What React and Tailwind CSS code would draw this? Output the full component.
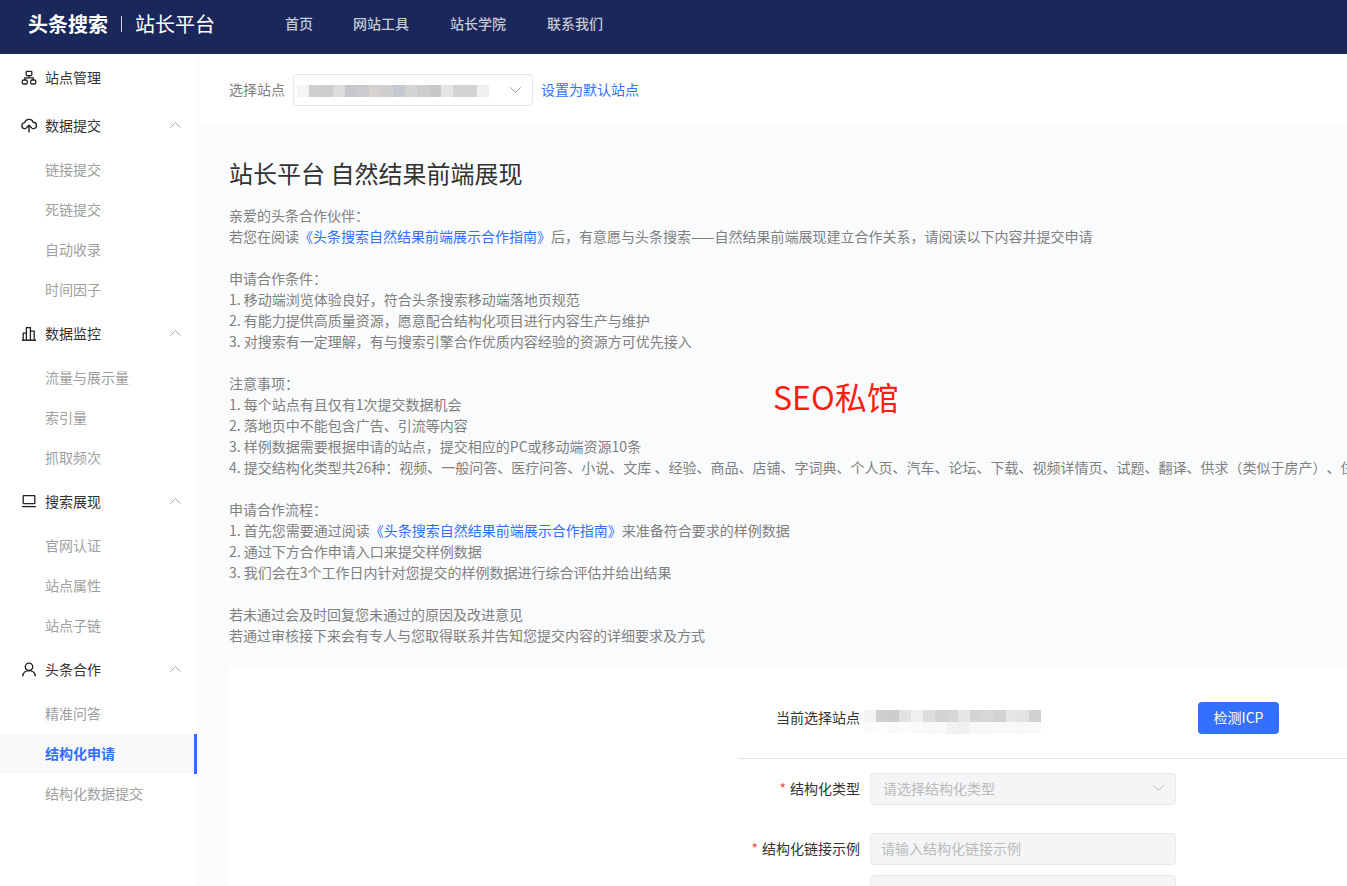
import React from 'react';

const NetworkIcon = () => (
  <svg width="16" height="16" viewBox="0 0 16 16" fill="none" stroke="#222" strokeWidth="1.3">
    <rect x="5.2" y="2.4" width="5.6" height="4.2" rx="0.5" />
    <path d="M8 6.6v2.2M3.8 11V8.8h8.4V11" />
    <rect x="1.3" y="11" width="5" height="4" rx="1.2" />
    <rect x="9.7" y="11" width="5" height="4" rx="1.2" />
  </svg>
);

const CloudIcon = () => (
  <svg width="16" height="16" viewBox="0 0 16 16" fill="none" stroke="#222" strokeWidth="1.4" strokeLinecap="round" strokeLinejoin="round">
    <path d="M4.6 11.6H4a3 3 0 0 1-.3-6A4.5 4.5 0 0 1 12.2 5.2a3.2 3.2 0 0 1 0 6.4h-.8" />
    <path d="M8 15V8.4M5.5 10.8 8 8.3l2.5 2.5" />
  </svg>
);

const ChartIcon = () => (
  <svg width="16" height="16" viewBox="0 0 16 16" fill="none" stroke="#222" strokeWidth="1.3">
    <path d="M1 15.2h14" strokeWidth="1.5" />
    <path d="M2.2 15V8.2h3.2V15M5.4 15V2.6h4V15M9.4 15V6.2h3.8V15" />
  </svg>
);

const LaptopIcon = () => (
  <svg width="16" height="16" viewBox="0 0 16 16" fill="none" stroke="#222" strokeWidth="1.3">
    <rect x="2.2" y="2.6" width="11.6" height="8" rx="0.4" />
    <path d="M1 13.6h14" />
  </svg>
);

const UserIcon = () => (
  <svg width="16" height="16" viewBox="0 0 16 16" fill="none" stroke="#222" strokeWidth="1.4">
    <circle cx="8" cy="5.8" r="3.7" />
    <path d="M1.7 15.2c.3-3.4 3-5.6 6.3-5.6s6 2.2 6.3 5.6" />
  </svg>
);

const Chevron = ({ up, color = '#aaa' }) => (
  <svg width="11" height="6" viewBox="0 0 11 6" fill="none" stroke={color} strokeWidth="1">
    <path d={up ? 'M.4 5.6 5.5.6l5.1 5' : 'M.4.4l5.1 5 5.1-5'} />
  </svg>
);

const menu = [
  { title: '站点管理', icon: <NetworkIcon /> },
  { title: '数据提交', icon: <CloudIcon />, items: ['链接提交', '死链提交', '自动收录', '时间因子'] },
  { title: '数据监控', icon: <ChartIcon />, items: ['流量与展示量', '索引量', '抓取频次'] },
  { title: '搜索展现', icon: <LaptopIcon />, items: ['官网认证', '站点属性', '站点子链'] },
  { title: '头条合作', icon: <UserIcon />, items: ['精准问答', '结构化申请', '结构化数据提交'] },
];

const ACTIVE = '结构化申请';

// mosaic colours of the blurred site name
const topBlur = ['#f4f4f4', '#cfcfcf', '#cdcdcd', '#dcdcdc', '#c7c7cb', '#cbcbcf', '#d6d2d0', '#cfcfd2', '#c6c8d1', '#d4d4d4', '#cecdcb', '#c8c8c8', '#e4e4e4', '#d3d3d3', '#d2d4d4', '#f0f0f0'];
const formBlur = ['#f4f4f4', '#cfcfcf', '#cdcdcd', '#e2e2e2', '#f0f0f0', '#dedede', '#d5d3d3', '#d6d6d6', '#e6e6e6', '#d6d4d2', '#d9d7d5', '#d2d2d2', '#e6e6e6', '#e2e2e2', '#d0d0d0'];
const formBlurLow = ['#fbfbfb', '#fdfdfd', '#fafafa', '#fcfcfc', '#fafafa', '#f8f8f8', '#fafafa', '#f2f2f2', '#f0f0f0', '#f8f8f8', '#f7f7f7', '#f9f9f9', '#f9f9f9', '#f8f8f8', '#f9f9f9'];

const Blur = ({ colors, cell, height, className = '' }) => (
  <div className={`flex ${className}`}>
    {colors.map((c, i) => (
      <div key={i} style={{ width: cell, height, background: c }} />
    ))}
  </div>
);

const Link = ({ children }) => <span className="text-[#3370ff]">{children}</span>;

const Intro = () => (
  <div className="whitespace-nowrap text-sm leading-[21px] text-[#808080] [text-spacing-trim:space-all]">
    <p>亲爱的头条合作伙伴：</p>
    <p>若您在阅读<Link>《头条搜索自然结果前端展示合作指南》</Link>后，有意愿与头条搜索——自然结果前端展现建立合作关系，请阅读以下内容并提交申请</p>
    <p className="mt-[21px]">申请合作条件：</p>
    <p>1. 移动端浏览体验良好，符合头条搜索移动端落地页规范</p>
    <p>2. 有能力提供高质量资源，愿意配合结构化项目进行内容生产与维护</p>
    <p>3. 对搜索有一定理解，有与搜索引擎合作优质内容经验的资源方可优先接入</p>
    <p className="mt-[21px]">注意事项：</p>
    <p>1. 每个站点有且仅有1次提交数据机会</p>
    <p>2. 落地页中不能包含广告、引流等内容</p>
    <p>3. 样例数据需要根据申请的站点，提交相应的PC或移动端资源10条</p>
    <p>4. 提交结构化类型共26种：视频、一般问答、医疗问答、小说、文库 、经验、商品、店铺、字词典、个人页、汽车、论坛、下载、视频详情页、试题、翻译、供求（类似于房产）、住宿</p>
    <p className="mt-[21px]">申请合作流程：</p>
    <p>1. 首先您需要通过阅读<Link>《头条搜索自然结果前端展示合作指南》</Link>来准备符合要求的样例数据</p>
    <p>2. 通过下方合作申请入口来提交样例数据</p>
    <p>3. 我们会在3个工作日内针对您提交的样例数据进行综合评估并给出结果</p>
    <p className="mt-[21px]">若未通过会及时回复您未通过的原因及改进意见</p>
    <p>若通过审核接下来会有专人与您取得联系并告知您提交内容的详细要求及方式</p>
  </div>
);

const Label = ({ children, required }) => (
  <div className="mb-[2px] w-[121px] shrink-0 whitespace-nowrap text-right text-sm text-[#333]">
    {required && <span className="mr-1 text-[#f54a45]">*</span>}
    {children}
  </div>
);

export default function App() {
  return (
    <div className="flex h-[886px] flex-col overflow-hidden bg-white font-['Noto_Sans_CJK_SC',sans-serif]">
      <header className="flex h-[54px] shrink-0 items-center bg-[#19275a] pb-[6px] pl-[28px] text-white">
        <span className="text-[20px] font-bold">头条搜索</span>
        <span className="mx-[13px] h-[16px] w-px bg-white/80" />
        <span className="text-[20px]">站长平台</span>
        <nav className="mb-[2px] ml-[70px] flex gap-[29px] text-sm font-medium text-white/75">
          <span className="w-[39px]">首页</span>
          <span className="w-[68px]">网站工具</span>
          <span className="w-[68px]">站长学院</span>
          <span>联系我们</span>
        </nav>
      </header>

      <div className="flex min-h-0 flex-1">
        <aside className="w-[197px] shrink-0 pt-1 text-sm">
          {menu.map((group) => (
            <div key={group.title} className="mb-1 first:mb-2">
              <div className="flex h-10 items-center pb-[2px] pl-[21px] pr-[16px] text-[#333]">
                <span className="flex w-[24px] shrink-0 items-center">{group.icon}</span>
                <span className="flex-1">{group.title}</span>
                {group.items && <Chevron up />}
              </div>
              {group.items && (
                <div className="mt-1">
                  {group.items.map((item) => (
                    <div
                      key={item}
                      className={
                        item === ACTIVE
                          ? 'flex h-10 items-center border-r-[3px] border-[#3370ff] bg-[#f8f9fb] pb-[2px] pl-[45px] font-bold text-[#3370ff]'
                          : 'flex h-10 items-center pb-[2px] pl-[45px] text-[#a0a0a0]'
                      }
                    >
                      {item}
                    </div>
                  ))}
                </div>
              )}
            </div>
          ))}
        </aside>

        <main className="relative min-w-0 flex-1 overflow-hidden shadow-[inset_2px_0_2px_rgba(240,242,248,0.5)]">
          <div className="flex h-[72px] items-center pl-[32px] text-sm">
            <span className="mb-[2px] mr-2 text-[#808080]">选择站点</span>
            <div className="flex h-8 w-[240px] items-center rounded border border-[#e8e8e8] pl-[3px]">
              <Blur colors={topBlur} cell={12} height={12} className="mt-[1px]" />
              <span className="ml-auto mr-[11px] flex"><Chevron color="#999" /></span>
            </div>
            <span className="mb-[2px] ml-2 text-[#3370ff]">设置为默认站点</span>
          </div>

          <div className="bg-[#fafbfd] pl-[32px] pt-[30px]">
            <h1 className="mb-[15px] whitespace-nowrap text-2xl leading-[34px] text-[#333]">站长平台 自然结果前端展现</h1>
            <Intro />

            <section className="mt-[20px] h-[300px] bg-white pl-[510px] pt-[36px]">
              <div className="flex h-[32px] items-center">
                <div className="mb-[2px] ml-[26px] w-[95px] shrink-0 whitespace-nowrap text-right text-sm text-[#333]">当前选择站点</div>
                <div className="ml-[4px] mt-[8px] w-[177px]">
                  <Blur colors={formBlur} cell={12} height={12} />
                  <Blur colors={formBlurLow} cell={12} height={12} />
                </div>
                <button className="ml-[157px] h-8 w-[81px] rounded bg-[#3370ff] pb-[2px] text-sm text-white">检测ICP</button>
              </div>
              <div className="mt-[24px] border-t border-[#e3e3e3]" />
              <div className="mt-[14px] flex h-8 items-center">
                <Label required>结构化类型</Label>
                <div className="ml-[10px] flex h-8 w-[306px] items-center justify-between rounded border border-[#e8e9eb] bg-[#f4f5f7] pb-[2px] pl-3 pr-[11px] text-sm text-[#bbb]">
                  请选择结构化类型
                  <Chevron color="#bbb" />
                </div>
              </div>
              <div className="mt-[28px] flex h-8 items-center">
                <Label required>结构化链接示例</Label>
                <div className="ml-[10px] flex h-8 w-[306px] items-center rounded border border-[#e8e9eb] bg-[#f4f5f7] pb-[2px] pl-[10px] text-sm text-[#bbb]">请输入结构化链接示例</div>
              </div>
              <div className="mt-[10px] flex h-8 items-center">
                <div className="w-[121px] shrink-0" />
                <div className="ml-[10px] flex h-8 w-[306px] items-center rounded border border-[#e8e9eb] bg-[#f4f5f7] pl-[10px] pt-[1px] text-sm text-[#bbb]">请输入结构化数据示例</div>
              </div>
            </section>
          </div>

          <div className="absolute left-[576px] top-[318px] whitespace-nowrap text-[32px] text-[#ff1d12]">SEO私馆</div>
        </main>
      </div>
    </div>
  );
}
